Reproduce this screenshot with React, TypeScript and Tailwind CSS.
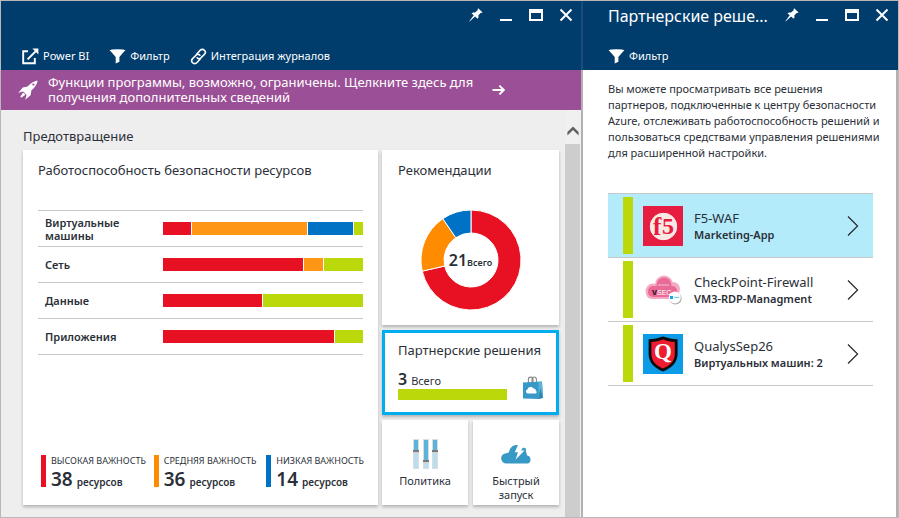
import type { ReactNode } from "react";

const COLORS = {
  red: "#e81123",
  orange: "#ff8c00",
  amber: "#ff9615",
  blue: "#0072c6",
  green: "#bad80a",
};

type Segment = { color: string; value: number };

const healthRows: { label: string; segments: Segment[] }[] = [
  {
    label: "Виртуальные машины",
    segments: [
      { color: COLORS.red, value: 28 },
      { color: COLORS.amber, value: 115 },
      { color: COLORS.blue, value: 45 },
      { color: COLORS.green, value: 9 },
    ],
  },
  {
    label: "Сеть",
    segments: [
      { color: COLORS.red, value: 140 },
      { color: COLORS.amber, value: 19 },
      { color: COLORS.green, value: 39 },
    ],
  },
  {
    label: "Данные",
    segments: [
      { color: COLORS.red, value: 99 },
      { color: COLORS.green, value: 100 },
    ],
  },
  {
    label: "Приложения",
    segments: [
      { color: COLORS.red, value: 171 },
      { color: COLORS.green, value: 28 },
    ],
  },
];

const severities = [
  { label: "ВЫСОКАЯ ВАЖНОСТЬ", count: 38, bar: "bg-[#e81123]" },
  { label: "СРЕДНЯЯ ВАЖНОСТЬ", count: 36, bar: "bg-[#ff8c00]" },
  { label: "НИЗКАЯ ВАЖНОСТЬ", count: 14, bar: "bg-[#0072c6]" },
];

const recommendations: Segment[] = [
  { color: COLORS.red, value: 15 },
  { color: COLORS.orange, value: 4 },
  { color: COLORS.blue, value: 2 },
];

function PinIcon() {
  return (
    <svg viewBox="0 0 14 14" className="h-[14px] w-[14px]" fill="currentColor" aria-hidden="true">
      <path d="M9.2 0.3 L13.6 4.4 L12.3 5 L11.6 4.9 L9.3 7.6 L9.6 9.2 L8.6 10.7 L6.1 8.6 L0.6 13.5 L0.3 13.2 L4.7 7.3 L2.5 5.2 L4.2 4.4 L6 4.5 L8.7 2.3 L8.5 1.4 Z" />
    </svg>
  );
}

function MinimizeIcon() {
  return (
    <svg viewBox="0 0 14 14" className="h-[14px] w-[14px]" fill="currentColor" aria-hidden="true">
      <rect x="1" y="11" width="12" height="2" />
    </svg>
  );
}

function MaximizeIcon() {
  return (
    <svg viewBox="0 0 14 14" className="h-[14px] w-[14px]" fill="currentColor" aria-hidden="true">
      <path fillRule="evenodd" d="M0 1h14v12H0z M2 5v6h10V5z" />
    </svg>
  );
}

function CloseIcon() {
  return (
    <svg viewBox="0 0 14 14" className="h-[14px] w-[14px]" stroke="currentColor" strokeWidth="2" aria-hidden="true">
      <path d="M1.5 1.5l11 11M12.5 1.5l-11 11" />
    </svg>
  );
}

function WindowControls() {
  const controls: [string, ReactNode][] = [
    ["Закрепить", <PinIcon />],
    ["Свернуть", <MinimizeIcon />],
    ["Развернуть", <MaximizeIcon />],
    ["Закрыть", <CloseIcon />],
  ];
  return (
    <div className="flex shrink-0">
      {controls.map(([name, icon]) => (
        <button key={name} type="button" aria-label={name} className="flex h-7 w-[30px] items-center justify-center">
          {icon}
        </button>
      ))}
    </div>
  );
}

function ExternalIcon() {
  return (
    <svg viewBox="0 0 17 17" className="h-[17px] w-[17px]" aria-hidden="true">
      <path d="M6 3.2H1.2v12h11.6V10" fill="none" stroke="currentColor" strokeWidth="1.9" />
      <path d="M5.6 11.4L13.6 3.4" stroke="currentColor" strokeWidth="2" />
      <path d="M10.4 0.6H16.4V6.6Z" fill="currentColor" />
    </svg>
  );
}

function FilterIcon() {
  return (
    <svg viewBox="0 0 17 17" className="h-[17px] w-[17px]" fill="currentColor" aria-hidden="true">
      <path d="M0.8 2.2L6.7 9V15.4L10.4 13.8V9L16.2 2.2z" />
      <ellipse cx="8.5" cy="2.4" rx="7.8" ry="1.2" />
    </svg>
  );
}

function LinkIcon() {
  return (
    <svg viewBox="0 0 17 17" className="h-[17px] w-[17px]" fill="none" stroke="currentColor" strokeWidth="1.6" strokeLinecap="round" aria-hidden="true">
      <path d="M6.6 6.2l3.6-3.9a2.9 2.9 0 0 1 4.2 0 2.9 2.9 0 0 1 0 4.1L11 9.8a2.8 2.8 0 0 1-3.9 0" />
      <path d="M10.4 10.8l-3.6 3.9a2.9 2.9 0 0 1-4.2 0 2.9 2.9 0 0 1 0-4.1L6 7.2a2.8 2.8 0 0 1 3.9 0" />
    </svg>
  );
}

function RocketIcon() {
  return (
    <svg viewBox="0 0 20 20" className="h-5 w-5 shrink-0" fill="currentColor" aria-hidden="true">
      <path d="M19.6 0.4C16 0.8 12.6 3.2 9.6 6.6L4.8 7.4L0.4 12.8L5.2 11.4L8.6 15L7.2 19.8L12.6 15.2L13.4 10.4C16.8 7.4 19.2 4 19.6 0.4Z" />
      <path d="M5.2 12.4L2.4 16.4L2.8 17.4L3.6 17.6L7.4 14.8Z" />
      <circle cx="15.4" cy="4.6" r="1.1" fill="#9b4f96" />
    </svg>
  );
}

function BagIcon() {
  return (
    <svg viewBox="0 0 20 24" className="h-6 w-5 shrink-0" aria-hidden="true">
      <path d="M5.4 7V3.4a2.3 2.3 0 0 1 4.6 0V7M9 6V3.2a2.2 2.2 0 0 1 4.4 0V7" fill="none" stroke="#8a8a8a" strokeWidth="1.1" />
      <path d="M0 6.4L19 5.6L20 21.8L15.4 23L0 22.4z" fill="#3999c6" />
      <path d="M15.6 5.8L19 5.6L20 21.8L15.4 23z" fill="#59b4d9" />
      <path d="M17.2 12L20 21.8L15.4 23z" fill="#2f86b3" />
      <path d="M4.6 17.4a2 2 0 0 1-.2-3.9 3.2 3.2 0 0 1 6-.9 2.2 2.2 0 0 1 2.4 2.2 1.5 1.5 0 0 1 .2 2.6z" fill="#fff" />
    </svg>
  );
}

function SlidersIcon() {
  const sliders = [
    { x: 1, knob: 12 },
    { x: 11, knob: 22 },
    { x: 20, knob: 12 },
  ];
  return (
    <svg viewBox="0 0 27 30" className="h-[30px] w-[27px]" aria-hidden="true">
      {sliders.map(({ x, knob }) => (
        <g key={x}>
          <rect x={x} y="0" width="6" height="30" fill="#dcdcdc" />
          <rect x={x + 1} y="1" width="4" height="28" fill="#b8dff0" />
          <rect x={x + 1} y="1" width="4" height={knob - 2} fill="#59b4d9" />
          <rect x={x} y={knob - 1} width="6" height="2" fill="#7a7a7a" />
          <rect x={x} y={knob + 1} width="6" height="1" fill="#d0d0d0" />
        </g>
      ))}
    </svg>
  );
}

function CloudBoltIcon() {
  return (
    <svg viewBox="0 0 31 20" className="h-5 w-[31px]" aria-hidden="true">
      <path d="M5.6 19.6A5.2 5.2 0 0 1 5.2 9.2C6.6 9 7.8 8.8 8.2 7.6C9 3 12.6 0.6 16.6 1L22 3.4L25 4.6C24.6 7 25.6 9.4 26.2 11.6A4.1 4.1 0 0 1 26.4 19.6Z" fill="#3999c6" />
      <path d="M17.4 0L13.8 8.2H17L14.6 15.4L23.6 6.6H20L23.4 1.4Z" fill="#fff" />
    </svg>
  );
}

function F5Logo() {
  return (
    <svg viewBox="0 0 40 40" className="h-10 w-10" aria-hidden="true">
      <rect width="40" height="40" fill="#e61c40" />
      <circle cx="20.5" cy="20.5" r="13.5" fill="#f8e9e4" />
      <g fill="#e61c40" fontFamily="'Liberation Serif', serif" fontWeight="700">
        <text x="10" y="29" fontSize="25">f</text>
        <text x="19" y="28" fontSize="24">5</text>
      </g>
      <circle cx="20.5" cy="20.5" r="13.2" fill="none" stroke="#f8e9e4" strokeWidth="1" />
    </svg>
  );
}

function VsecLogo() {
  return (
    <svg viewBox="0 0 40 40" className="h-10 w-10" aria-hidden="true">
      <g fill="#f5a9c6">
        <circle cx="10" cy="21" r="7.5" />
        <circle cx="21" cy="14.5" r="9" />
        <circle cx="30" cy="19" r="7" />
        <rect x="3" y="17" width="33" height="12" rx="6" />
      </g>
      <g fill="#e96a97">
        <circle cx="21" cy="15" r="7.5" />
        <rect x="5" y="16" width="29" height="11" rx="5" />
      </g>
      <text x="9" y="25" fontFamily="'Liberation Sans', sans-serif" fontWeight="700" fontSize="9" fill="#2a1520">v</text>
      <text x="14" y="25" fontFamily="'Liberation Sans', sans-serif" fontSize="7" fill="#fff">SEC</text>
      <path d="M15 15h11" stroke="#f7bfd3" strokeWidth="1" />
      <circle cx="32.4" cy="28.4" r="6.2" fill="#aaa" />
      <circle cx="31.8" cy="27.6" r="6" fill="#fff" />
      <rect x="27" y="26" width="3" height="3" fill="#18a8e0" />
      <path d="M31 27.5h5.4" stroke="#7fd0ee" strokeWidth="1.2" />
    </svg>
  );
}

function QualysLogo() {
  return (
    <svg viewBox="0 0 40 40" className="h-10 w-10" aria-hidden="true">
      <rect width="40" height="40" fill="#0c9be6" />
      <path d="M20 2.4C24.6 4 29.6 5 34.6 5.2V20C34.6 28.4 28.4 34.4 20 37.4C11.6 34.4 5.6 28.4 5.6 20V5.2C10.6 5 15.6 4 20 2.4Z" fill="#0b0b0d" />
      <path d="M20 5.4C24 6.8 28 7.8 31.8 8V20C31.8 27 27 31.8 20 34.4C13 31.8 8.4 27 8.4 20V8C12.2 7.8 16 6.8 20 5.4Z" fill="#ed1c2e" />
      <text x="20" y="25" textAnchor="middle" fontFamily="'Liberation Serif', serif" fontWeight="700" fontSize="23" fill="#fff">Q</text>
    </svg>
  );
}

function ToolbarButton({ icon, children }: { icon: ReactNode; children: ReactNode }) {
  return (
    <button type="button" className="flex items-center gap-1 whitespace-nowrap text-[11px] leading-4">
      {icon}
      {children}
    </button>
  );
}

function SegmentBar({ segments }: { segments: Segment[] }) {
  return (
    <div className="flex h-[13px] gap-px">
      {segments.map((s) => (
        <div key={s.color} className="basis-0" style={{ backgroundColor: s.color, flexGrow: s.value }} />
      ))}
    </div>
  );
}

function Donut({ segments }: { segments: Segment[] }) {
  const total = segments.reduce((sum, s) => sum + s.value, 0);
  const point = (turn: number, r: number) =>
    `${50 + r * Math.sin(turn * 2 * Math.PI)} ${50 - r * Math.cos(turn * 2 * Math.PI)}`;
  let start = 0;
  return (
    <svg viewBox="0 0 100 100" className="h-[100px] w-[100px]" aria-hidden="true">
      {segments.map((s) => {
        const from = start;
        const to = start + s.value / total;
        start = to;
        const large = to - from > 0.5 ? 1 : 0;
        return (
          <path
            key={s.color}
            d={`M${point(from, 50)}A50 50 0 ${large} 1 ${point(to, 50)}L${point(to, 27)}A27 27 0 ${large} 0 ${point(from, 27)}Z`}
            fill={s.color}
            stroke="#fff"
            strokeWidth="1"
          />
        );
      })}
    </svg>
  );
}

function HealthCard() {
  return (
    <section className="row-span-3 flex min-w-0 flex-col bg-white px-[15px] pt-[10px] pb-[11px] shadow-[0_2px_3px_rgba(0,0,0,0.25)]">
      <h3 className="text-[13px] leading-5">Работоспособность безопасности ресурсов</h3>
      <table className="mt-[30px] w-full border-collapse border-t border-[#c8c8c8]">
        <tbody>
          {healthRows.map((row) => (
            <tr key={row.label} className="h-9 border-b border-[#c8c8c8]">
              <th scope="row" className="py-0 pr-8 pl-[7px] text-left align-middle text-[11px] leading-[13px] font-semibold">
                {row.label}
              </th>
              <td className="w-[200px] p-0 align-middle">
                <SegmentBar segments={row.segments} />
              </td>
            </tr>
          ))}
        </tbody>
      </table>
      <ul className="-mr-3 mt-auto grid grid-cols-3 gap-x-1 pl-[3px]">
        {severities.map((s) => (
          <li key={s.label} className="flex items-start gap-[5px] whitespace-nowrap">
            <span className={`h-8 w-[5px] shrink-0 ${s.bar}`} />
            <div>
              <div className="text-[9px] leading-3">{s.label}</div>
              <div className="flex items-baseline gap-1 leading-6 font-semibold">
                <span className="text-[19px]">{s.count}</span>
                <span className="text-[10px]">ресурсов</span>
              </div>
            </div>
          </li>
        ))}
      </ul>
    </section>
  );
}

function SecurityCenterBlade() {
  return (
    <main className="flex min-w-0 grow flex-col bg-[#eeeeee]">
      <header className="bg-[#003c6c] text-white">
        <div className="flex h-[35px] justify-end">
          <WindowControls />
        </div>
        <div className="flex h-[34px] items-center gap-5 pt-[6px] pl-[21px]">
          <ToolbarButton icon={<ExternalIcon />}>Power BI</ToolbarButton>
          <ToolbarButton icon={<FilterIcon />}>Фильтр</ToolbarButton>
          <ToolbarButton icon={<LinkIcon />}>Интеграция журналов</ToolbarButton>
        </div>
      </header>
      <a href="#details" className="flex h-10 items-center bg-[#9b4f96] pl-[17px] text-white">
        <RocketIcon />
        <span className="ml-[10px] w-[434px] text-[13px] leading-[15px]">
          Функции программы, возможно, ограничены. Щелкните здесь для получения дополнительных сведений
        </span>
        <svg viewBox="0 0 14 12" className="ml-[10px] h-3 w-[14px]" fill="none" stroke="currentColor" strokeWidth="2" aria-hidden="true">
          <path d="M0.5 6h11M7.4 1.6L11.8 6l-4.4 4.4" />
        </svg>
      </a>
      <div className="flex grow">
        <div className="min-w-0 grow pr-[6px] pl-[22px]">
          <h2 className="pt-4 pb-1 text-[13px] leading-5">Предотвращение</h2>
          <div className="grid grid-cols-[minmax(0,1fr)_177px] grid-rows-[175px_85px_85px] gap-x-1 gap-y-[5px]">
            <HealthCard />
            <section className="bg-white px-4 pt-[10px] shadow-[0_2px_3px_rgba(0,0,0,0.25)]">
              <h3 className="text-[13px] leading-5">Рекомендации</h3>
              <div className="mt-[30px] grid place-items-center">
                <div className="col-start-1 row-start-1">
                  <Donut segments={recommendations} />
                </div>
                <div className="col-start-1 row-start-1 flex items-baseline font-semibold">
                  <span className="text-base leading-5">21</span>
                  <span className="text-[9px]">Всего</span>
                </div>
              </div>
            </section>
            <button
              type="button"
              className="flex flex-col border-[3px] border-[#00adef] bg-white px-[13px] pt-[7px] text-left shadow-[0_2px_3px_rgba(0,0,0,0.25)]"
            >
              <span className="text-[13px] leading-5 whitespace-nowrap">Партнерские решения</span>
              <span className="mt-[10px] flex w-full items-end justify-between">
                <span className="w-[109px]">
                  <span className="flex items-baseline gap-1">
                    <span className="text-base leading-[18px] font-semibold">3</span>
                    <span className="text-[11px] leading-4">Всего</span>
                  </span>
                  <span className="block h-[11px] bg-[#bad80a]" />
                </span>
                <BagIcon />
              </span>
            </button>
            <div className="grid grid-cols-2 gap-[5px]">
              <button
                type="button"
                className="flex flex-col items-center bg-white pt-[19px] text-[11px] leading-[14px] shadow-[0_2px_3px_rgba(0,0,0,0.25)]"
              >
                <SlidersIcon />
                <span className="mt-[5px]">Политика</span>
              </button>
              <button
                type="button"
                className="flex flex-col items-center bg-white px-4 pt-6 text-[11px] leading-[14px] shadow-[0_2px_3px_rgba(0,0,0,0.25)]"
              >
                <CloudBoltIcon />
                <span className="mt-[10px]">Быстрый запуск</span>
              </button>
            </div>
          </div>
        </div>
        <div className="flex w-4 shrink-0 flex-col bg-[#f0f0f0] pr-px">
          <button type="button" aria-label="Прокрутить вверх" className="flex h-[34px] items-center justify-center pt-2">
            <svg viewBox="0 0 12 10" className="h-[10px] w-3" fill="#606060" aria-hidden="true">
              <path d="M6 0.4L11.6 6V9.4L6 4L0.4 9.4V6z" />
            </svg>
          </button>
          <div className="grow bg-[#cdcdcd]" />
        </div>
      </div>
    </main>
  );
}

function SolutionItem({ logo, title, subtitle, selected }: { logo: ReactNode; title: string; subtitle: string; selected?: boolean }) {
  return (
    <li className={selected ? "border-b border-[#c8c8c8] bg-[#b3ebfb]" : "border-b border-[#c8c8c8]"}>
      <a href="#solution" className="flex h-[63px] items-center pr-[14px] pl-[15px]">
        <span className="mr-[10px] h-[57px] w-[10px] shrink-0 bg-[#bad80a]" />
        <span className="shrink-0">{logo}</span>
        <span className="ml-[11px] min-w-0 grow pt-[2px] whitespace-nowrap">
          <span className="block text-[13px] leading-[17px]">{title}</span>
          <span className="block text-[11px] leading-4 font-semibold">{subtitle}</span>
        </span>
        <svg viewBox="0 0 12 20" className="h-5 w-3 shrink-0" fill="none" stroke="#25282d" strokeWidth="1.2" aria-hidden="true">
          <path d="M1 0.5L10.6 10L1 19.5" />
        </svg>
      </a>
    </li>
  );
}

function PartnerBlade() {
  return (
    <aside className="flex w-[317px] shrink-0 flex-col border-l-2 border-[#b2b2b2] bg-white">
      <header className="-ml-[2px] border-l-2 border-[#1d4c78] bg-[#003c6c] pr-px text-white">
        <div className="flex h-[35px] justify-between pl-[25px]">
          <h2 className="pt-[3px] text-base leading-6 whitespace-nowrap">Партнерские реше...</h2>
          <WindowControls />
        </div>
        <div className="flex h-[34px] items-center pt-[6px] pl-[25px]">
          <ToolbarButton icon={<FilterIcon />}>Фильтр</ToolbarButton>
        </div>
      </header>
      <div className="grow border-r-2 border-[#b2b2b2] pr-[23px] pl-[25px]">
        <p className="-mr-5 pt-[11px] text-[11px] leading-4">
          Вы можете просматривать все решения
          <br />
          партнеров, подключенные к центру безопасности Azure, отслеживать работоспособность решений и пользоваться
          средствами управления решениями для расширенной настройки.
        </p>
        <ul className="mt-8 border-t border-[#c8c8c8]">
          <SolutionItem logo={<F5Logo />} title="F5-WAF" subtitle="Marketing-App" selected />
          <SolutionItem logo={<VsecLogo />} title="CheckPoint-Firewall" subtitle="VM3-RDP-Managment" />
          <SolutionItem logo={<QualysLogo />} title="QualysSep26" subtitle="Виртуальных машин: 2" />
        </ul>
      </div>
    </aside>
  );
}

export default function App() {
  return (
    <div className="flex min-h-screen w-full border border-[#b8b8b8] bg-white font-['Noto_Sans','Open_Sans',sans-serif] text-[#2b2f38]">
      <SecurityCenterBlade />
      <PartnerBlade />
    </div>
  );
}
